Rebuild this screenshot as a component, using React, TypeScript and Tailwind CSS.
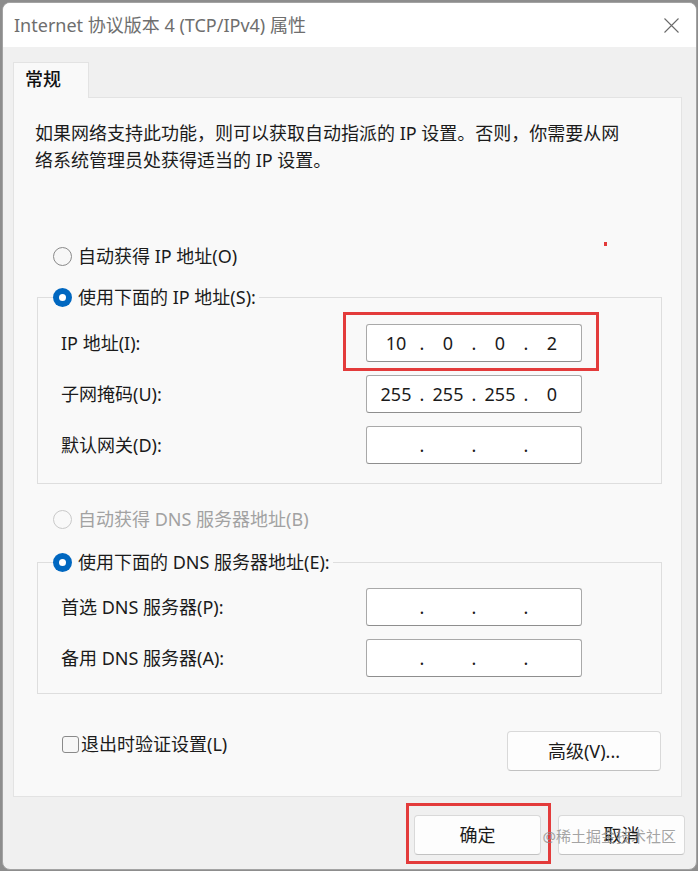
import React from "react";

const FONT = "font-['Noto_Sans','Noto_Sans_CJK_SC',sans-serif]";

function Radio({ checked = false, disabled = false }: { checked?: boolean; disabled?: boolean }) {
  if (checked) {
    return (
      <span className="flex h-[19px] w-[19px] shrink-0 items-center justify-center rounded-full bg-[#0067c0]">
        <span className="h-[7px] w-[7px] rounded-full bg-white" />
      </span>
    );
  }
  return (
    <span
      className={
        disabled
          ? "h-[19px] w-[19px] shrink-0 rounded-full border border-[#c9c9c9] bg-[#f9f9f9]"
          : "h-[19px] w-[19px] shrink-0 rounded-full border border-[#8a8a8a] bg-[#f7f7f7]"
      }
    />
  );
}

function IpInput({ parts }: { parts: string[] }) {
  return (
    <div className="flex h-[38px] w-[216px] items-center rounded-[3px] border border-[#a9a9a9] border-b-[#8e8e8e] bg-white px-[8px] text-[18px] text-[#1b1b1b]">
      {parts.map((p, i) => (
        <React.Fragment key={i}>
          <span className="w-[42px] text-center">{p}</span>
          {i < 3 && <span className="w-[10px] text-center">.</span>}
        </React.Fragment>
      ))}
    </div>
  );
}

function Row({ label, children }: { label: string; children: React.ReactNode }) {
  return (
    <div className="flex h-[38px] items-center">
      <span className="w-[305px] text-[18px] text-[#1b1b1b]">{label}</span>
      {children}
    </div>
  );
}

function Button({ children, className = "" }: { children: React.ReactNode; className?: string }) {
  return (
    <div
      className={
        "relative flex h-[40px] items-center justify-center rounded-[4px] border border-[#d9d9d9] border-b-[#c2c2c2] bg-[#fdfdfd] text-[18px] text-[#1b1b1b] " +
        className
      }
    >
      {children}
    </div>
  );
}

export default function App() {
  const empty = ["", "", "", ""];
  return (
    <div className={"h-[871px] w-[698px] bg-[#8d8d8d] pb-[1px] pl-[2px] pr-[1px] pt-[2px] " + FONT}>
      <div className="relative flex h-[868px] w-[695px] flex-col overflow-hidden rounded-[8px] border border-[#a3a3a3] bg-[#f0f0f0]">
        {/* Title bar */}
        <div className="flex h-[44px] items-center justify-between bg-white pl-[11px] pr-[17px]">
          <span className="text-[18px] text-[#6e6e6e]">Internet 协议版本 4 (TCP/IPv4) 属性</span>
          <svg width="15" height="15" viewBox="0 0 15 15" className="mt-[1px]">
            <path d="M0.5 0.5 L14.5 14.5 M14.5 0.5 L0.5 14.5" stroke="#6a6a6a" strokeWidth="1.1" fill="none" />
          </svg>
        </div>

        {/* Body */}
        <div className="pl-[10px] pr-[14px] pt-[15px]">
          <div className="relative z-10 -mb-px h-[36px] w-[76px] border border-b-0 border-[#e3e3e3] bg-[#f9f9f9] pl-[11px] pt-[3px] text-[18px] font-medium text-[#111]">
            常规
          </div>
          <div className="relative h-[700px] border border-[#e3e3e3] bg-[#f9f9f9]">
            <div className="absolute left-[590px] top-[144px] h-[4px] w-[3px] bg-[#e23a3a]" />

            <div className="ml-[21px] mt-[22px] text-[18px] leading-[27px] text-[#1b1b1b]">
              <div className="whitespace-nowrap">如果网络支持此功能，则可以获取自动指派的 IP 设置。否则，你需要从网</div>
              <div className="whitespace-nowrap">络系统管理员处获得适当的 IP 设置。</div>
            </div>

            <div className="ml-[39px] mt-[69px] flex h-[26px] items-center gap-[6px] text-[18px] text-[#1b1b1b]">
              <Radio />
              <span>自动获得 IP 地址(O)</span>
            </div>

            {/* IP group */}
            <div className="ml-[23px] mt-[28px] w-[625px] border border-[#dedede] pb-[19px]">
              <div className="-mt-[14px] ml-[15px] flex h-[26px] w-fit items-center gap-[6px] bg-[#f9f9f9] pr-[3px] text-[18px] text-[#1b1b1b]">
                <Radio checked />
                <span>使用下面的 IP 地址(S):</span>
              </div>
              <div className="mt-[14px] flex flex-col gap-[13px] pl-[23px]">
                <Row label="IP 地址(I):">
                  <div className="relative">
                    <IpInput parts={["10", "0", "0", "2"]} />
                    <div className="absolute -bottom-[9px] -left-[23px] -right-[17px] -top-[12px] border-[3px] border-[#e33b3b]" />
                  </div>
                </Row>
                <Row label="子网掩码(U):">
                  <IpInput parts={["255", "255", "255", "0"]} />
                </Row>
                <Row label="默认网关(D):">
                  <IpInput parts={empty} />
                </Row>
              </div>
            </div>

            <div className="ml-[39px] mt-[22px] flex h-[26px] items-center gap-[6px] text-[18px] text-[#a2a2a2]">
              <Radio disabled />
              <span>自动获得 DNS 服务器地址(B)</span>
            </div>

            {/* DNS group */}
            <div className="ml-[23px] mt-[30px] w-[625px] border border-[#dedede] pb-[16px]">
              <div className="-mt-[14px] ml-[15px] flex h-[26px] w-fit items-center gap-[6px] bg-[#f9f9f9] pr-[3px] text-[18px] text-[#1b1b1b]">
                <Radio checked />
                <span>使用下面的 DNS 服务器地址(E):</span>
              </div>
              <div className="mt-[13px] flex flex-col gap-[13px] pl-[23px]">
                <Row label="首选 DNS 服务器(P):">
                  <IpInput parts={empty} />
                </Row>
                <Row label="备用 DNS 服务器(A):">
                  <IpInput parts={empty} />
                </Row>
              </div>
            </div>

            <div className="ml-[48px] mr-[20px] mt-[37px] flex items-start justify-between">
              <div className="flex h-[26px] items-center gap-[2px] text-[18px] text-[#1b1b1b]">
                <span className="h-[17px] w-[17px] rounded-[3px] border border-[#8a8a8a] bg-[#f7f7f7]" />
                <span>退出时验证设置(L)</span>
              </div>
              <Button className="w-[154px]">高级(V)...</Button>
            </div>
          </div>
        </div>

        {/* Footer */}
        <div className="relative mt-[18px] flex justify-end gap-[17px] pr-[11px]">
          <Button className="w-[127px]">
            确定
            <div className="absolute -bottom-[10px] -left-[9px] -right-[11px] -top-[13px] border-[3px] border-[#e33b3b]" />
          </Button>
          <Button className="w-[127px]">取消</Button>
          <div className="pointer-events-none absolute right-[20px] top-[10px] text-[15px] leading-[22px] text-[#8c8c8c]/80">
            @稀土掘金技术社区
          </div>
        </div>
      </div>
    </div>
  );
}
